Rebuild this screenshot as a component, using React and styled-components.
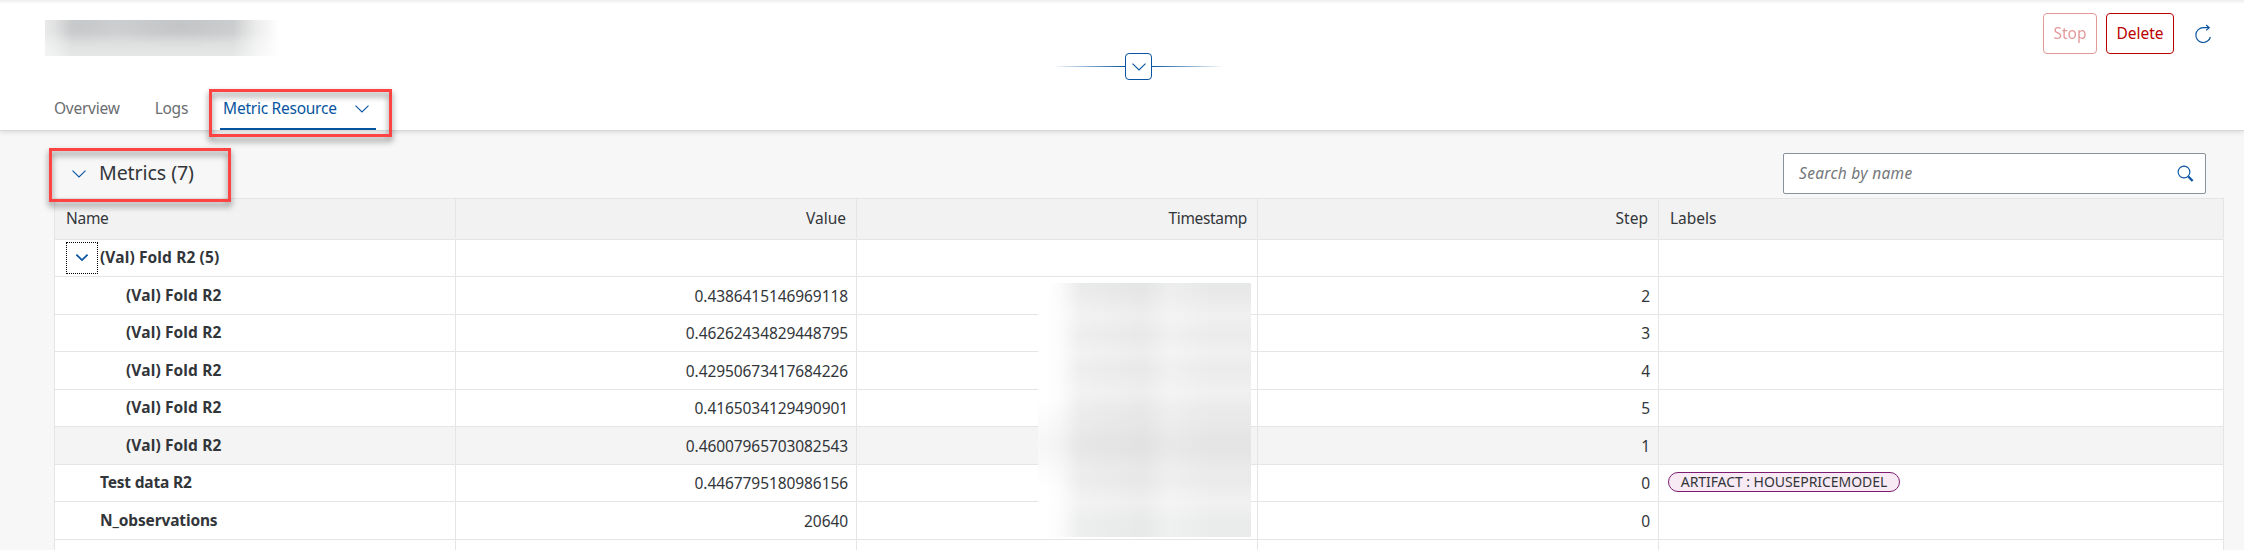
import React from 'react';
import styled, { createGlobalStyle } from 'styled-components';

const BLUE = '#0854a0';

const GlobalStyle = createGlobalStyle`
  *, *::before, *::after { box-sizing: border-box; }
  body {
    margin: 0;
    background: #f7f7f7;
    overflow: hidden;
    font-family: "Noto Sans", "Open Sans", sans-serif;
    font-size: 15.5px;
    line-height: 22px;
    color: #32363a;
  }
`;

const Page = styled.div`
  position: relative;
  width: 2244px;
  height: 550px;
  overflow: hidden;
`;

const Header = styled.header`
  height: 131px;
  display: flex;
  flex-direction: column;
  background: linear-gradient(#ededed, #fff 4px);
  border-bottom: 1px solid #d9d9d9;
  box-shadow: 0 1px 5px rgba(0, 0, 0, 0.13);
`;

const TitleRow = styled.div`
  height: 53px;
  display: flex;
  justify-content: space-between;
  align-items: flex-start;
  padding: 13px 32px 0 45px;
`;

const HiddenTitle = styled.div`
  width: 240px;
  height: 36px;
  margin-top: 7px;
  background:
    linear-gradient(90deg, rgba(255, 255, 255, 0.55) 0, rgba(255, 255, 255, 0.4) 10px, transparent 26px, transparent 188px, rgba(255, 255, 255, 0.6) 211px, #fff 234px),
    radial-gradient(ellipse 38px 22px at 37px 6px, rgba(0, 0, 0, 0.035), transparent),
    radial-gradient(ellipse 70px 22px at 135px 6px, rgba(0, 0, 0, 0.05), transparent),
    linear-gradient(#cdcecf, #cfd0d1 35%, #dedfdf 65%, #e6e7e7);
`;

const Actions = styled.div`
  display: flex;
  align-items: center;
`;

const Button = styled.button`
  width: ${(p) => p.$width}px;
  height: 41px;
  margin-right: ${(p) => p.$gap}px;
  padding: 0 0 2px;
  border: 1px solid #bb0000;
  border-radius: 4px;
  background: #fff;
  color: #bb0000;
  font: inherit;
  letter-spacing: -0.05px;
  opacity: ${(p) => (p.disabled ? 0.4 : 1)};
`;

const IconButton = styled.button`
  display: flex;
  padding: 0;
  border: 0;
  background: none;
`;

const Expander = styled.div`
  height: 27px;
  display: flex;
  align-items: center;
  justify-content: center;
  padding-left: 33px;
`;

const Line = styled.i`
  width: 72px;
  height: 1px;
  background: linear-gradient(${(p) => p.$to}, transparent, ${BLUE});
`;

const ExpandButton = styled.button`
  width: 27px;
  height: 27px;
  display: flex;
  align-items: center;
  justify-content: center;
  padding: 0;
  border: 1px solid ${BLUE};
  border-radius: 4px;
  background: #fff;
`;

const Tabs = styled.nav`
  height: 50px;
  display: flex;
  align-items: stretch;
  padding-left: 54px;
`;

const Tab = styled.a`
  display: flex;
  align-items: flex-start;
  margin-right: ${(p) => p.$gap || 0}px;
  padding: 17px ${(p) => (p.$active ? '7px 0 3px' : '0 0 0')};
  border-bottom: 2px solid ${(p) => (p.$active ? BLUE : 'transparent')};
  color: ${(p) => (p.$active ? BLUE : '#6a6d70')};
  letter-spacing: -0.25px;
  white-space: nowrap;
  svg { margin: 8px 0 0 18px; }
`;

const Toolbar = styled.div`
  height: 67px;
  display: flex;
  align-items: center;
  justify-content: space-between;
  padding: 20px 38px 2px 72px;
`;

const SectionTitle = styled.h2`
  display: flex;
  align-items: center;
  gap: 13px;
  margin: 0 0 1px;
  font-size: 19.6px;
  font-weight: 400;
  line-height: 28px;
  letter-spacing: -0.1px;
  svg { margin-top: 1px; }
`;

const SearchField = styled.label`
  width: 423px;
  height: 41px;
  display: flex;
  align-items: center;
  justify-content: space-between;
  padding: 0 11px 1px 15px;
  border: 1px solid #89919a;
  border-radius: 2px;
  background: #fff;
  color: #74777a;
  font-style: italic;
  letter-spacing: 0.3px;
`;

const Table = styled.section`
  width: 2170px;
  margin-left: 54px;
  border: solid #e5e5e5;
  border-width: 1px 0 0 1px;
  background: #fff;
`;

const Row = styled.div`
  height: ${(p) => p.$height}px;
  display: grid;
  grid-template-columns: repeat(4, 401px) 565px;
  background: ${(p) => (p.$hover ? '#f4f4f4' : '#fff')};
  border-bottom: 1px solid #e5e5e5;
`;

const HeadRow = styled(Row)`
  background: #f2f2f2;
  padding-bottom: 1px;
`;

const Cell = styled.div`
  display: flex;
  align-items: center;
  justify-content: ${(p) => (p.$right ? 'flex-end' : 'flex-start')};
  padding: 0 8px;
  border-right: 1px solid #e5e5e5;
  letter-spacing: -0.08px;
  white-space: nowrap;
`;

const HeadCell = styled(Cell)`
  padding: 0 ${(p) => (p.$right ? 10 : 11)}px 1px;
  letter-spacing: ${(p) => p.$track || 0}px;
`;

const LabelsCell = styled(Cell)`
  padding: 0 9px 3px;
`;

const NameCell = styled(Cell)`
  padding: 0 0 2px ${(p) => p.$indent}px;
  font-weight: 700;
  letter-spacing: ${(p) => p.$track}px;
`;

const Toggle = styled.button`
  width: 32px;
  height: 32px;
  display: flex;
  align-items: center;
  justify-content: center;
  margin: 2px 2px 0 0;
  padding: 0 0 1px;
  border: 1px dotted #000;
  background: none;
`;

const Tag = styled.span`
  width: 232px;
  height: 20px;
  text-align: center;
  border: 1px solid #7d1c70;
  border-radius: 10px;
  background: #f8eaf4;
  font-size: 14px;
  line-height: 17px;
  letter-spacing: -0.06px;
`;

const HiddenTimes = styled.div`
  position: absolute;
  left: 1038px;
  top: 283px;
  width: 213px;
  height: 254px;
  background:
    linear-gradient(transparent 115px, rgba(0, 0, 0, 0.03) 155px, rgba(0, 0, 0, 0.03) 168px, transparent 205px),
    linear-gradient(90deg, #fff 8px, rgba(255, 255, 255, 0.8) 22px, rgba(255, 255, 255, 0.15) 42px, transparent 75px, rgba(0, 0, 0, 0.012) 104px, rgba(255, 255, 255, 0.25) 132px, transparent 175px),
    linear-gradient(#e6e7e7, #e9e9e9 12px, #f0f0f0 32px, #ebebeb 52px, #f0f0f0 70px, #ebebeb 86px, #f0f0f0 108px, #ececec 125px, #ededed 145px, #ebebeb 163px, #eeeeee 185px, #ebebeb 200px, #f0f1f0 219px, #eaebeb 240px);
`;

const Highlight = styled.div`
  position: absolute;
  left: ${(p) => p.$x}px;
  top: ${(p) => p.$y}px;
  width: ${(p) => p.$w}px;
  height: ${(p) => p.$h}px;
  border: 3px solid #ff4343;
  filter: drop-shadow(0 4px 3px rgba(0, 0, 0, 0.5));
  pointer-events: none;
`;

const Chevron = ({ width = 14, height = 8, stroke = 1.1 }) => (
  <svg width={width} height={height} viewBox="0 0 14 8" fill="none" stroke={BLUE} strokeWidth={stroke}>
    <path d="M.5 .7 7 7 13.5 .7" />
  </svg>
);

const RefreshIcon = () => (
  <svg width="18" height="20" viewBox="0 0 18 20" fill="none" stroke={BLUE} strokeWidth="1.2">
    <path d="M15 3.7H9.3A7.4 7.4 0 1 0 16.4 13" />
    <path d="M12.2 1 15.2 3.7 12.2 6.4" />
  </svg>
);

const SearchIcon = () => (
  <svg width="17" height="17" viewBox="0 0 17 17" fill="none" stroke={BLUE}>
    <circle cx="7" cy="7" r="5.9" strokeWidth="1.1" />
    <path d="M11.3 11.5 15.6 16" strokeWidth="2.3" />
  </svg>
);

const rows = [
  { name: '(Val) Fold R2', value: '0.4386415146969118', step: 2 },
  { name: '(Val) Fold R2', value: '0.46262434829448795', step: 3 },
  { name: '(Val) Fold R2', value: '0.42950673417684226', step: 4 },
  { name: '(Val) Fold R2', value: '0.4165034129490901', step: 5 },
  { name: '(Val) Fold R2', value: '0.46007965703082543', step: 1, hover: true },
  { name: 'Test data R2', value: '0.4467795180986156', step: 0, top: true, track: -0.18, label: 'ARTIFACT : HOUSEPRICEMODEL' },
  { name: 'N_observations', value: '20640', step: 0, top: true, track: -0.14 },
];

export default function App() {
  return (
    <Page>
      <GlobalStyle />
      <Header>
        <TitleRow>
          <HiddenTitle />
          <Actions>
            <Button $width={54} $gap={9} disabled>Stop</Button>
            <Button $width={68} $gap={20}>Delete</Button>
            <IconButton aria-label="Refresh"><RefreshIcon /></IconButton>
          </Actions>
        </TitleRow>
        <Expander>
          <Line $to="90deg" />
          <ExpandButton aria-label="Expand header"><Chevron /></ExpandButton>
          <Line $to="270deg" />
        </Expander>
        <Tabs>
          <Tab $gap={35}>Overview</Tab>
          <Tab $gap={32}>Logs</Tab>
          <Tab $active>Metric Resource<Chevron /></Tab>
        </Tabs>
      </Header>
      <Toolbar>
        <SectionTitle><Chevron />Metrics (7)</SectionTitle>
        <SearchField>Search by name<SearchIcon /></SearchField>
      </Toolbar>
      <Table>
        <HeadRow $height={41}>
          <HeadCell $track={-0.3}>Name</HeadCell>
          <HeadCell $right>Value</HeadCell>
          <HeadCell $right $track={-0.35}>Timestamp</HeadCell>
          <HeadCell $right>Step</HeadCell>
          <HeadCell>Labels</HeadCell>
        </HeadRow>
        <Row $height={37}>
          <NameCell $indent={11} $track={0.12}>
            <Toggle aria-label="Collapse"><Chevron width={12} height={7} stroke={2} /></Toggle>
            (Val) Fold R2 (5)
          </NameCell>
          <Cell /><Cell /><Cell /><Cell />
        </Row>
        {rows.map((r, i) => (
          <Row key={i} $height={i % 2 ? 37 : 38} $hover={r.hover}>
            <NameCell $indent={r.top ? 45 : 71} $track={r.track ?? 0.12}>{r.name}</NameCell>
            <Cell $right>{r.value}</Cell>
            <Cell />
            <Cell $right>{r.step}</Cell>
            <LabelsCell>{r.label && <Tag>{r.label}</Tag>}</LabelsCell>
          </Row>
        ))}
        <Row $height={37}><Cell /><Cell /><Cell /><Cell /><Cell /></Row>
      </Table>
      <HiddenTimes />
      <Highlight $x={209} $y={89} $w={183} $h={48} />
      <Highlight $x={49} $y={148} $w={182} $h={54} />
    </Page>
  );
}
